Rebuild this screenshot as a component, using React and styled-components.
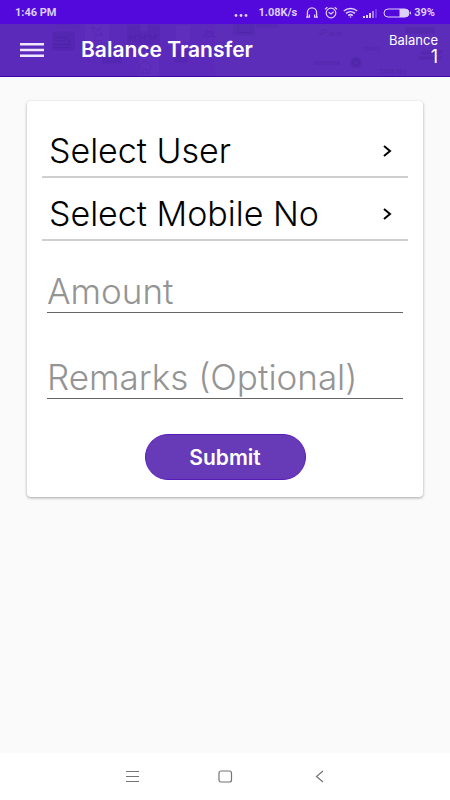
import React from 'react';
import styled, { createGlobalStyle } from 'styled-components';

const GlobalStyle = createGlobalStyle`
  * {
    box-sizing: border-box;
  }

  body {
    margin: 0;
    background-color: #fafafa;
    font-family: Inter, 'Open Sans', sans-serif;
  }
`;

const Screen = styled.div`
  display: flex;
  flex-direction: column;
  min-height: 100vh;
`;

const StatusBar = styled.div`
  display: flex;
  align-items: center;
  justify-content: space-between;
  height: 24px;
  padding: 1px 15px 0;
  background-color: #5409dc;
  color: #ddcff8;
  font-family: Roboto, sans-serif;
  font-size: 11px;
  font-weight: 700;
  line-height: 24px;
`;

const StatusIcons = styled.div`
  display: flex;
  align-items: center;
  gap: 5px;

  svg {
    display: block;
  }
`;

const Speed = styled.span`
  margin: 0 3px 0 5px;
`;

const Battery = styled.span`
  display: flex;
  align-items: center;
  gap: 3px;
`;

const Header = styled.header`
  position: relative;
  display: flex;
  align-items: center;
  height: 53px;
  padding: 0 12px 0 20px;
  background-color: #5c2db8;
  border-bottom: 1px solid #4207a8;
  color: #fff;
`;

const Backdrop = styled.svg`
  position: absolute;
  inset: 0;
  width: 100%;
  height: 100%;
`;

const MenuButton = styled.button`
  position: relative;
  display: flex;
  padding: 0;
  border: 0;
  background: none;
  color: #efe6ff;
`;

const Title = styled.h1`
  position: relative;
  flex: 1;
  margin: 0 0 0 37px;
  font-size: 21px;
  font-weight: 600;
  line-height: 24px;
`;

const Balance = styled.div`
  position: relative;
  display: flex;
  flex-direction: column;
  align-items: flex-end;
  font-size: 13px;
  line-height: 14px;

  strong {
    font-size: 18px;
    font-weight: 400;
    line-height: 20px;
  }
`;

const Main = styled.main`
  flex: 1;
  padding: 24px 27px;
`;

const Card = styled.form`
  display: flex;
  flex-direction: column;
  padding: 24px 15px 17px;
  background-color: #fff;
  border-radius: 4px;
  box-shadow: 0 1px 3px rgba(0, 0, 0, 0.35);
`;

const SelectRow = styled.button`
  display: flex;
  align-items: center;
  justify-content: space-between;
  height: 53px;
  margin-bottom: 10px;
  padding: 0 15px 0 7px;
  border: 0;
  border-bottom: 2px solid #cfcfcf;
  background: none;
  color: #000;
  font-family: inherit;
  font-size: 34px;
  font-weight: 300;
  line-height: 40px;
  text-align: left;
`;

const Field = styled.input`
  height: 46px;
  margin: 16px 5px 24px;
  padding: 2px 0 0;
  border: 0;
  border-bottom: 1px solid #666;
  border-radius: 0;
  background: none;
  outline: none;
  color: #000;
  font-family: inherit;
  font-size: 35px;
  font-weight: 300;

  &::placeholder {
    color: #949494;
    opacity: 1;
  }
`;

const SubmitButton = styled.button`
  align-self: center;
  width: 161px;
  height: 46px;
  margin-top: 11px;
  border: 1px solid #5a1cb8;
  border-radius: 23px;
  background-color: #673ab7;
  color: #fff;
  font-family: inherit;
  font-size: 21px;
  font-weight: 600;
`;

const NavBar = styled.nav`
  display: flex;
  align-items: center;
  justify-content: center;
  gap: 69px;
  height: 47px;
  background-color: #fff;
`;

const NavButton = styled.button`
  display: flex;
  padding: 0;
  border: 0;
  background: none;
  color: #757575;
`;

const MoreIcon = () => (
  <svg width="14" height="14" viewBox="0 0 14 14" fill="currentColor" aria-hidden="true">
    <circle cx="2" cy="9.5" r="1.4" />
    <circle cx="7" cy="9.5" r="1.4" />
    <circle cx="12" cy="9.5" r="1.4" />
  </svg>
);

const HeadphonesIcon = () => (
  <svg width="14" height="14" viewBox="0 0 14 14" fill="none" stroke="currentColor" strokeWidth="1.3" aria-hidden="true">
    <path d="M1 11.2h3.4V8.6M13 11.2H9.6V8.6M2.4 11V6.5a4.6 4.6 0 0 1 9.2 0V11" />
  </svg>
);

const AlarmIcon = () => (
  <svg width="14" height="14" viewBox="0 0 14 14" fill="none" stroke="currentColor" strokeWidth="1.2" aria-hidden="true">
    <circle cx="7" cy="7" r="4.8" />
    <path d="M4.6 6.2L7 8l2.6-2.2M1 3.2l2.4-2M13 3.2l-2.4-2" />
  </svg>
);

const WifiIcon = () => (
  <svg width="15" height="14" viewBox="0 0 15 14" fill="none" stroke="currentColor" strokeWidth="1.5" aria-hidden="true">
    <path d="M.8 5c3.8-3.4 9.6-3.4 13.4 0M3 7.4c2.6-2.3 6.4-2.3 9 0M5.2 9.6c1.4-1.2 3.2-1.2 4.6 0" />
    <circle cx="7.5" cy="11" r=".8" fill="currentColor" stroke="none" />
  </svg>
);

const SignalIcon = () => (
  <svg width="15" height="14" viewBox="0 0 15 14" fill="currentColor" aria-hidden="true">
    <path d="M0 10h2v2H0zM3 9h2v3H3zM6 7h2v5H6z" />
    <path d="M9 5h2v7H9z" opacity="0.6" />
    <path d="M12 3h2v9h-2z" opacity="0.25" />
  </svg>
);

const BatteryIcon = () => (
  <svg width="28" height="14" viewBox="0 0 28 14" aria-hidden="true">
    <rect x="1" y="3" width="25" height="8" rx="4" fill="none" stroke="currentColor" strokeWidth="1" />
    <path d="M16.5 3H22a4 4 0 0 1 0 8h-5.5z" fill="currentColor" />
    <path d="M27.4 5.6v2.8" stroke="currentColor" />
  </svg>
);

const Chevron = () => (
  <svg width="12" height="14" viewBox="0 0 12 14" fill="none" stroke="currentColor" strokeWidth="2" aria-hidden="true">
    <path d="M3 2l6 5-6 5" />
  </svg>
);

// faint collage of service icons and brand names behind the title
const HeaderArt = () => (
  <Backdrop viewBox="0 0 450 53" preserveAspectRatio="xMidYMid slice" aria-hidden="true">
    <rect x="0" y="0" width="215" height="53" fill="#5a24c0" opacity="0.25" />
    <g fill="#3d1a96" opacity="0.24">
      <rect x="52" y="8" width="23" height="19" rx="2" />
      <rect x="127" y="1" width="33" height="20" opacity="0.7" />
      <rect x="102" y="32" width="20" height="8" />
      <rect x="174" y="27" width="14" height="12" />
      <rect x="233" y="0" width="22" height="12" rx="2" opacity="0.6" />
      <rect x="256" y="0" width="22" height="4" opacity="0.6" />
      <rect x="405" y="4" width="30" height="6" />
      <rect x="56" y="0" width="24" height="5" opacity="0.4" />
      <circle cx="356" cy="39" r="5.5" />
      <path d="M421 28l12-2 11 1-4 4h-20zM418 33h25l-3 3h-21z" />
    </g>
    <g fill="#8a5fe0" opacity="0.09">
      <rect x="85" y="1" width="24" height="18" />
      <rect x="139" y="32" width="20" height="21" />
      <rect x="176" y="2" width="14" height="16" />
      <circle cx="144" cy="4" r="4" />
    </g>
    <g fill="none" stroke="#3d1a96" opacity="0.28">
      <path d="M54 14h10c4 0 6 4 6 7H54M56 17h4M62 17h3M54 24h17" />
      <path d="M92 3c0 7 5 10 11 8zM97 7l5-4M97 10l-3 7h8" />
      <path d="M130 17v-6M135 17v-6M140 17v-6M145 17v-6M150 17v-6M155 17v-6M128 12l5 2 5-2 5 2 5-2 5 2 5-2" />
      <path d="M138 43l7-6 7 6M140 43v7h10v-7M143 50v-4h4v4" />
      <path d="M203 14c2-6 10-6 12 0M206 8h6v5h-6z" />
      <path d="M238 2v7h13V2" />
      <path d="M319 9c2-4 8-3 7-1s-4 2-7 3" />
      <circle cx="356" cy="39" r="3" />
    </g>
    <g fill="#3d1a96" opacity="0.3" fontSize="6">
      <text x="329" y="12">airtel</text>
      <text x="363" y="27">dishtv</text>
      <text x="313" y="41" fontSize="5" fontWeight="700">VIDEOCON</text>
      <text x="379" y="50" fontWeight="700">TATA Sky</text>
    </g>
  </Backdrop>
);

const App = () => {
  return (
    <Screen>
      <GlobalStyle />
      <StatusBar>
        <span>1:46 PM</span>
        <StatusIcons>
          <MoreIcon />
          <Speed>1.08K/s</Speed>
          <HeadphonesIcon />
          <AlarmIcon />
          <WifiIcon />
          <SignalIcon />
          <Battery>
            <BatteryIcon />
            39%
          </Battery>
        </StatusIcons>
      </StatusBar>
      <Header>
        <HeaderArt />
        <MenuButton type="button" aria-label="Menu">
          <svg width="24" height="14" viewBox="0 0 24 14" fill="currentColor" aria-hidden="true">
            <path d="M0 0h24v2.4H0zM0 5.8h24v2.4H0zM0 11.6h24V14H0z" />
          </svg>
        </MenuButton>
        <Title>Balance Transfer</Title>
        <Balance>
          Balance
          <strong>1</strong>
        </Balance>
      </Header>
      <Main>
        <Card>
          <SelectRow type="button">
            Select User
            <Chevron />
          </SelectRow>
          <SelectRow type="button">
            Select Mobile No
            <Chevron />
          </SelectRow>
          <Field type="text" inputMode="decimal" aria-label="Amount" placeholder="Amount" />
          <Field type="text" aria-label="Remarks (Optional)" placeholder="Remarks (Optional)" />
          <SubmitButton type="submit">Submit</SubmitButton>
        </Card>
      </Main>
      <NavBar>
        <NavButton type="button" aria-label="Recent apps">
          <svg width="24" height="24" viewBox="0 0 24 24" fill="none" stroke="currentColor" aria-hidden="true">
            <path d="M6 6.5h13M6 11.5h13M6 16.5h13" />
          </svg>
        </NavButton>
        <NavButton type="button" aria-label="Home">
          <svg width="24" height="24" viewBox="0 0 24 24" fill="none" stroke="currentColor" strokeWidth="1.2" aria-hidden="true">
            <rect x="6" y="6" width="12.5" height="11" rx="2" />
          </svg>
        </NavButton>
        <NavButton type="button" aria-label="Back">
          <svg width="24" height="24" viewBox="0 0 24 24" fill="none" stroke="currentColor" strokeWidth="1.2" aria-hidden="true">
            <path d="M17 6l-6.5 5.5L17 17" />
          </svg>
        </NavButton>
      </NavBar>
    </Screen>
  );
};

export default App;
